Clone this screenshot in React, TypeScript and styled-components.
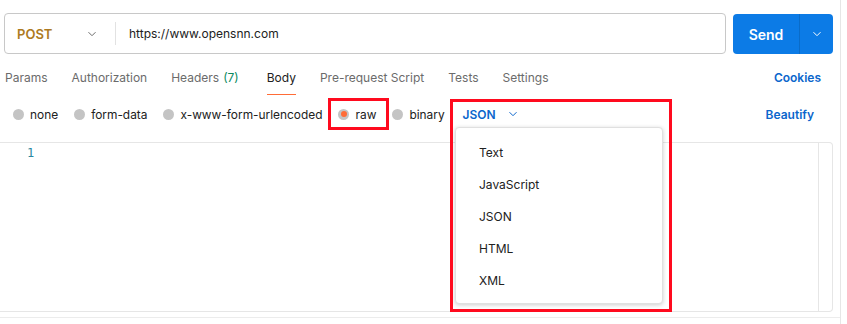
import React from "react";
import styled, { createGlobalStyle } from "styled-components";

const Global = createGlobalStyle`
  html, body { margin: 0; padding: 0; background: #fff; }
  body { font-family: Inter, "Noto Sans", sans-serif; color: #212121; }
  * { box-sizing: border-box; }
`;

const Page = styled.div`
  position: relative;
  width: 841px;
  height: 324px;
  border-right: 1px solid #e6e6e6;
  overflow: hidden;
`;

const TopBar = styled.div`
  display: flex;
  align-items: flex-start;
  gap: 7px;
  padding: 13px 0 0 4px;
`;

const UrlBox = styled.div`
  display: flex;
  align-items: center;
  width: 722px;
  height: 41px;
  border: 1px solid #c8c8c8;
  border-radius: 4px;
`;

const Method = styled.div`
  display: flex;
  align-items: center;
  justify-content: space-between;
  width: 111px;
  padding: 0 18px 0 12px;
  font-size: 13px;
  font-weight: 600;
  color: #ad7a21;
  border-right: 1px solid #e2e2e2;
  height: 23px;
`;

const UrlText = styled.div`
  padding-left: 13px;
  font-size: 12px;
  color: #212121;
`;

const SendGroup = styled.div`
  display: flex;
  width: 100px;
  height: 40px;
  margin-top: 1px;
  border-radius: 4px;
  background: #0c7be6;
  overflow: hidden;
`;

const SendMain = styled.div`
  flex: 1;
  display: flex;
  align-items: center;
  justify-content: center;
  color: #fff;
  font-size: 14px;
  font-weight: 600;
  border-right: 1px solid #0a6cc9;
`;

const SendArrow = styled.div`
  width: 33px;
  display: flex;
  align-items: center;
  justify-content: center;
`;

const Tabs = styled.div`
  display: flex;
  align-items: center;
  height: 46px;
  padding: 0 19px 0 5px;
`;

const Tab = styled.div<{ $active?: boolean }>`
  position: relative;
  margin-right: 24px;
  font-size: 12px;
  color: ${(p) => (p.$active ? "#212121" : "#6b6b6b")};
  padding-top: 1px;
  &::after {
    content: "";
    display: ${(p) => (p.$active ? "block" : "none")};
    position: absolute;
    left: 0;
    right: 0;
    bottom: -10px;
    height: 1px;
    background: #ff6c37;
  }
`;

const Count = styled.span`
  margin: 0 4px 0 4px;
  color: #0b8a5f;
`;

const Spacer = styled.div`
  flex: 1;
`;

const LinkText = styled.div`
  font-size: 12px;
  font-weight: 600;
  color: #0b66cc;
`;

const RadioRow = styled.div`
  display: flex;
  align-items: center;
  height: 28px;
  padding: 0 26px 0 13px;
`;

const RadioItem = styled.div`
  display: flex;
  align-items: center;
  gap: 6px;
  margin-right: 16px;
  font-size: 11.9px;
  color: #212121;
`;

const Dot = styled.span<{ $on?: boolean }>`
  width: 11px;
  height: 11px;
  border-radius: 50%;
  background: #c4c4c4;
  display: flex;
  align-items: center;
  justify-content: center;
  &::after {
    content: "";
    display: ${(p) => (p.$on ? "block" : "none")};
    width: 6px;
    height: 6px;
    border-radius: 50%;
    background: #ff6c37;
  }
`;

const LangSelect = styled.div`
  display: flex;
  align-items: center;
  gap: 12px;
  margin-left: 2px;
  font-size: 12px;
  font-weight: 600;
  color: #0b66cc;
`;

const Editor = styled.div`
  display: flex;
  width: 833px;
  height: 170px;
  margin-top: 14px;
  border-top: 1px solid #e6e6e6;
  border-right: 1px solid #e6e6e6;
  border-bottom: 1px solid #e6e6e6;
  border-radius: 0 4px 4px 0;
`;

const Gutter = styled.div`
  width: 40px;
  padding: 3px 0 0 27px;
  font-family: "DejaVu Sans Mono", monospace;
  font-size: 12px;
  color: #2c87a0;
`;

const Code = styled.div`
  flex: 1;
`;

const Scroll = styled.div`
  width: 14px;
  border-left: 1px solid #e6e6e6;
`;

const Footer = styled.div`
  margin-top: 5px;
  border-top: 1px solid #ececec;
`;

const Menu = styled.div`
  position: absolute;
  left: 455px;
  top: 127px;
  width: 208px;
  height: 177px;
  background: #fff;
  border: 1px solid #e0e0e0;
  border-radius: 4px;
  box-shadow: 0 1px 4px rgba(0, 0, 0, 0.2);
  padding-top: 8px;
`;

const MenuItem = styled.div`
  height: 32px;
  display: flex;
  align-items: center;
  padding-left: 23px;
  font-size: 12px;
  color: #212121;
`;

const Highlight = styled.div<{ $l: number; $t: number; $w: number; $h: number }>`
  position: absolute;
  left: ${(p) => p.$l}px;
  top: ${(p) => p.$t}px;
  width: ${(p) => p.$w}px;
  height: ${(p) => p.$h}px;
  border: 3px solid #ff0a1e;
  pointer-events: none;
`;

const Chevron = ({ color, size = 10 }: { color: string; size?: number }) => (
  <svg width={size} height={size} viewBox="0 0 10 10" fill="none">
    <path d="M1.5 3.2 L5 6.7 L8.5 3.2" stroke={color} strokeWidth="1" />
  </svg>
);

export default function App() {
  return (
    <Page>
      <Global />
      <TopBar>
        <UrlBox>
          <Method>
            POST
            <Chevron color="#6b6b6b" />
          </Method>
          <UrlText>https://www.opensnn.com</UrlText>
        </UrlBox>
        <SendGroup>
          <SendMain>Send</SendMain>
          <SendArrow>
            <Chevron color="#ffffff" />
          </SendArrow>
        </SendGroup>
      </TopBar>
      <Tabs>
        <Tab>Params</Tab>
        <Tab>Authorization</Tab>
        <Tab>
          Headers<Count>(7)</Count>
        </Tab>
        <Tab $active>Body</Tab>
        <Tab>Pre-request Script</Tab>
        <Tab>Tests</Tab>
        <Tab>Settings</Tab>
        <Spacer />
        <LinkText>Cookies</LinkText>
      </Tabs>
      <RadioRow>
        <RadioItem>
          <Dot />
          none
        </RadioItem>
        <RadioItem>
          <Dot />
          form-data
        </RadioItem>
        <RadioItem>
          <Dot />
          x-www-form-urlencoded
        </RadioItem>
        <RadioItem>
          <Dot $on />
          raw
        </RadioItem>
        <RadioItem>
          <Dot />
          binary
        </RadioItem>
        <LangSelect>
          JSON
          <Chevron color="#0b66cc" />
        </LangSelect>
        <Spacer />
        <LinkText>Beautify</LinkText>
      </RadioRow>
      <Editor>
        <Gutter>1</Gutter>
        <Code />
        <Scroll />
      </Editor>
      <Footer />
      <Menu>
        {["Text", "JavaScript", "JSON", "HTML", "XML"].map((t) => (
          <MenuItem key={t}>{t}</MenuItem>
        ))}
      </Menu>
      <Highlight $l={328} $t={98} $w={61} $h={32} />
      <Highlight $l={450} $t={99} $w={222} $h={213} />
    </Page>
  );
}
